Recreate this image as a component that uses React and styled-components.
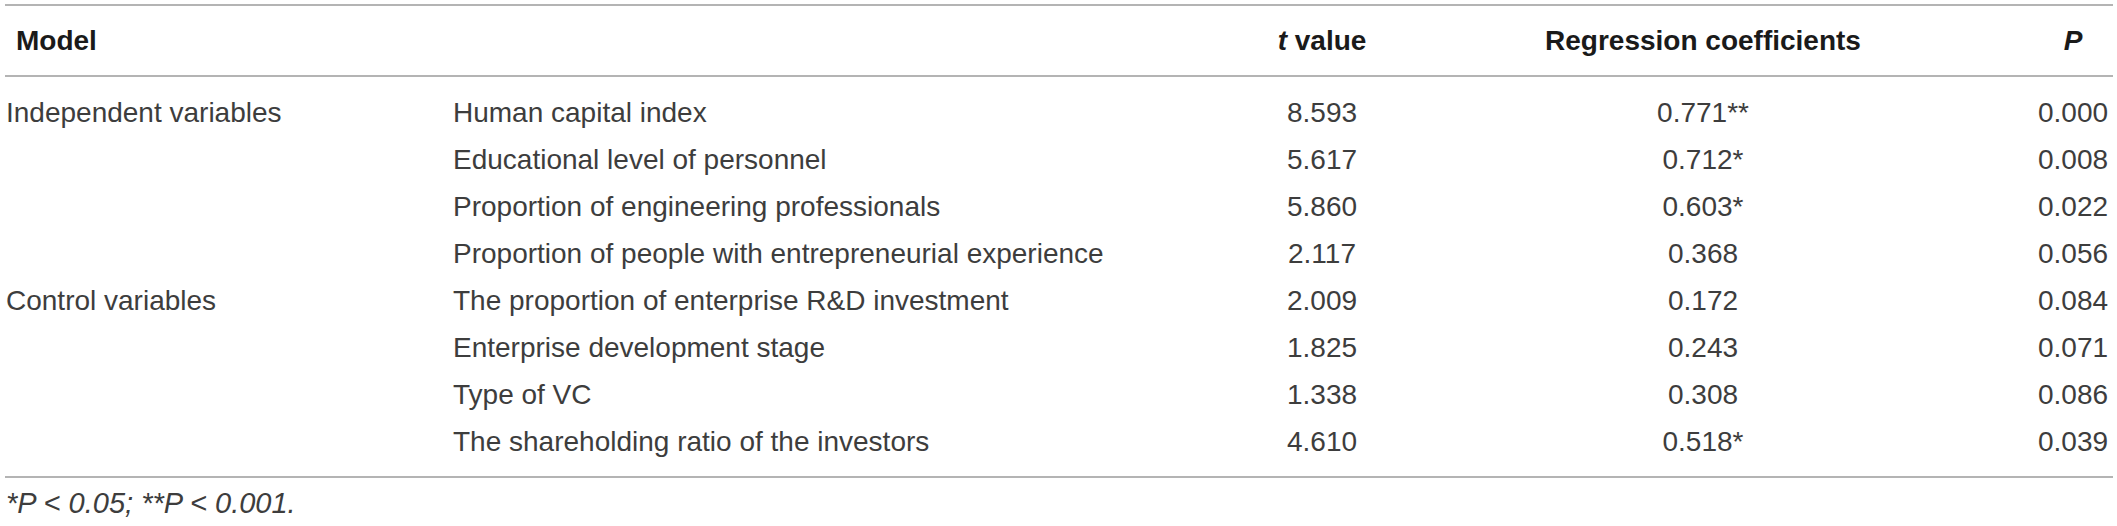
import React from 'react';
import styled, { createGlobalStyle } from 'styled-components';

const GlobalStyle = createGlobalStyle`
  body {
    margin: 0;
    background: #fff;
    font-family: 'Liberation Sans', Arial, sans-serif;
  }
`;

// rows of the regression table
const rows = [
  { group: 'Independent variables', name: 'Human capital index', t: '8.593', coef: '0.771**', p: '0.000' },
  { name: 'Educational level of personnel', t: '5.617', coef: '0.712*', p: '0.008' },
  { name: 'Proportion of engineering professionals', t: '5.860', coef: '0.603*', p: '0.022' },
  { name: 'Proportion of people with entrepreneurial experience', t: '2.117', coef: '0.368', p: '0.056' },
  { group: 'Control variables', name: 'The proportion of enterprise R&D investment', t: '2.009', coef: '0.172', p: '0.084' },
  { name: 'Enterprise development stage', t: '1.825', coef: '0.243', p: '0.071' },
  { name: 'Type of VC', t: '1.338', coef: '0.308', p: '0.086' },
  { name: 'The shareholding ratio of the investors', t: '4.610', coef: '0.518*', p: '0.039' },
];

const App = () => {
  return (
    <>
      <GlobalStyle />
      <Wrapper>
        <Table>
          <colgroup>
            <col style={{ width: 443 }} />
            <col style={{ width: 823 }} />
            <col style={{ width: 102 }} />
            <col style={{ width: 660 }} />
            <col style={{ width: 80 }} />
          </colgroup>
          <thead>
            <tr>
              <Th $pad='11px'>Model</Th>
              <Th />
              <Th $center>
                <em>t</em> value
              </Th>
              <Th $center>Regression coefficients</Th>
              <Th $center>
                <em>P</em>
              </Th>
            </tr>
          </thead>
          <tbody>
            {rows.map((r, i) => {
              const first = i === 0;
              const last = i === rows.length - 1;
              return (
                <tr key={r.name}>
                  <Td $first={first} $last={last} $pad='1px'>
                    {r.group || ''}
                  </Td>
                  <Td $first={first} $last={last} $pad='5px'>
                    {r.name}
                  </Td>
                  <Td $first={first} $last={last} $center>
                    {r.t}
                  </Td>
                  <Td $first={first} $last={last} $center>
                    {r.coef}
                  </Td>
                  <Td $first={first} $last={last} $center>
                    {r.p}
                  </Td>
                </tr>
              );
            })}
          </tbody>
        </Table>
        <Footnote>*P &lt; 0.05; **P &lt; 0.001.</Footnote>
      </Wrapper>
    </>
  );
};

const Wrapper = styled.div`
  padding: 4px 4px 0 5px;
  width: 2108px;
`;

const Table = styled.table`
  width: 2108px;
  table-layout: fixed;
  border-collapse: separate;
  border-spacing: 0;
  border-top: 2px solid #b4b4b4;
  border-bottom: 2px solid #b4b4b4;
  font-size: 28px;
  line-height: 33px;
`;

const Th = styled.th`
  padding: 18px 0;
  padding-left: ${(p) => p.$pad || '0'};
  text-align: ${(p) => (p.$center ? 'center' : 'left')};
  font-weight: 700;
  color: #1a1a1a;
  border-bottom: 2px solid #b4b4b4;
  white-space: nowrap;
  em {
    font-style: italic;
  }
`;

const Td = styled.td`
  padding-top: ${(p) => (p.$first ? '19px' : '7px')};
  padding-bottom: ${(p) => (p.$last ? '18px' : '7px')};
  padding-left: ${(p) => p.$pad || '0'};
  padding-right: 0;
  text-align: ${(p) => (p.$center ? 'center' : 'left')};
  font-weight: 400;
  color: #3d3d3d;
  white-space: nowrap;
  vertical-align: middle;
`;

const Footnote = styled.div`
  padding: 8px 0 0 1px;
  font-size: 29px;
  line-height: 34px;
  font-style: italic;
  color: #3d3d3d;
`;

export default App;
